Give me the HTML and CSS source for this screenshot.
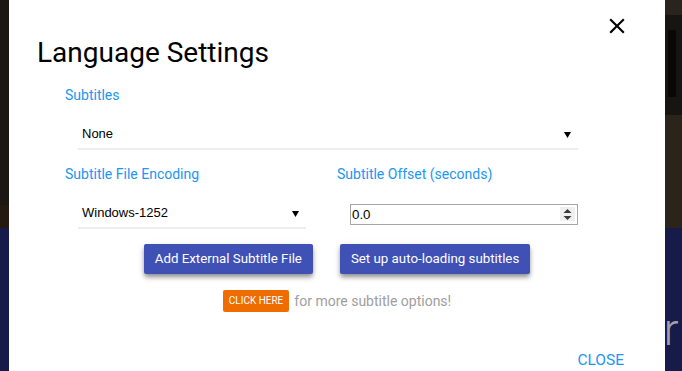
FILE: index.html
```html
<!DOCTYPE html>
<html lang="en">
<head>
<meta charset="utf-8">
<title>Language Settings</title>
<link rel="stylesheet" href="styles.css">
</head>
<body>
<div class="backdrop">
  <div class="bg-right">
    <div class="bg-right-top"></div>
    <div class="bg-frame"><div class="bg-hole"></div></div>
    <div class="bg-right-mid"></div>
  </div>
  <div class="bg-text">er</div>
</div>

<div class="modal">
  <button class="close-x" aria-label="Close">
    <svg width="26" height="26" viewBox="0 0 24 24"><path d="M19 6.41L17.59 5 12 10.590 6.41 5 5 6.41 10.59 12 5 17.59 6.41 19 12 13.41 17.59 19 19 17.59 13.41 12z" fill="#000"/></svg>
  </button>
  <h4 class="title">Language Settings</h4>

  <div class="form">
    <div class="field span2">
      <label class="label">Subtitles</label>
      <div class="select"><span>None</span><svg class="caret" width="7" height="6" viewBox="0 0 7 6"><polygon points="0,0 7,0 3.5,6" fill="#000"/></svg></div>
    </div>
    <div class="field">
      <label class="label">Subtitle File Encoding</label>
      <div class="select"><span>Windows-1252</span><svg class="caret" width="7" height="6" viewBox="0 0 7 6"><polygon points="0,0 7,0 3.5,6" fill="#000"/></svg></div>
    </div>
    <div class="field">
      <label class="label">Subtitle Offset (seconds)</label>
      <div class="ctrl">
        <div class="num">
          <input class="num-input" type="text" value="0.0">
          <span class="spin"><svg width="9" height="11" viewBox="0 0 9 11"><polygon points="4.5,0 8.5,4 0.5,4" fill="#3a3a3a"/><polygon points="0.5,7 8.5,7 4.5,11" fill="#3a3a3a"/></svg></span>
        </div>
      </div>
    </div>
  </div>

  <div class="actions">
    <button class="btn">Add External Subtitle File</button>
    <button class="btn">Set up auto-loading subtitles</button>
  </div>

  <div class="more"><span class="badge">Click here</span><span class="more-text">for more subtitle options!</span></div>

  <div class="footer"><a class="close-link">Close</a></div>
</div>
</body>
</html>
```

FILE: styles.css
```css
* { box-sizing: border-box; }

html, body {
  margin: 0;
  height: 100%;
  overflow: hidden;
}

body {
  position: relative;
  font-family: Roboto, "Noto Sans", sans-serif;
  background: linear-gradient(to bottom, #1b1712 0, #1b1712 205px, #251a10 205px, #251a10 228px, #161b4a 228px);
}

.backdrop {
  position: absolute;
  inset: 0;
}

.bg-right {
  position: absolute;
  left: 665px;
  top: 0;
  width: 17px;
  height: 228px;
  display: flex;
  flex-direction: column;
}
.bg-right-top { height: 15px; background: #29241d; }
.bg-frame {
  height: 100px;
  background: #171512;
  padding: 15px 6px 0 3px;
}
.bg-hole { height: 67px; background: #0a0807; }
.bg-right-mid { flex: 1; background: #2b241b; }

.bg-text {
  position: absolute;
  left: 641px;
  top: 304px;
  font-family: Roboto, sans-serif;
  font-weight: 300;
  font-size: 44px;
  line-height: 52px;
  color: #a3a3ad;
}

.modal {
  position: absolute;
  left: 9px;
  top: 0;
  width: 656px;
  height: 371px;
  overflow: hidden;
  background: #fff;
  padding-top: 36px;
}

.close-x {
  position: absolute;
  top: 13px;
  right: 35px;
  width: 26px;
  height: 26px;
  padding: 0;
  border: 0;
  background: none;
  display: block;
}
.close-x svg { display: block; }

.title {
  margin: 0 0 0 28px;
  font-size: 28px;
  line-height: 34px;
  font-weight: 400;
  color: #000;
}

.form {
  margin: 16px 0 0 56px;
  display: grid;
  grid-template-columns: 241px 241px;
  column-gap: 31px;
  row-gap: 15px;
}
.span2 { grid-column: 1 / 3; }

.label {
  display: block;
  font-size: 14px;
  line-height: 18px;
  color: #2196f3;
  margin-bottom: 16px;
}

.select {
  margin-left: 13px;
  display: flex;
  align-items: center;
  justify-content: space-between;
  padding: 6px 7px 6px 4px;
  font-family: "Liberation Sans", Arial, sans-serif;
  font-size: 13px;
  line-height: 16px;
  color: #000;
  border-bottom: 2px solid #eeeeee;
}
.caret { display: block; margin-top: 1px; }

.ctrl {
  margin-left: 13px;
  height: 30px;
  display: flex;
  align-items: center;
}
.num {
  width: 228px;
  height: 21px;
  border: 1px solid #a6a6a6;
  display: flex;
  align-items: center;
  padding: 0 2px 0 1px;
}
.num-input {
  flex: 1;
  min-width: 0;
  border: 0;
  padding: 0;
  outline: none;
  font-family: "Liberation Sans", Arial, sans-serif;
  font-size: 13.33px;
  color: #000;
  background: transparent;
}
.spin {
  width: 15px;
  height: 14px;
  background: #efefef;
  display: flex;
  align-items: center;
  justify-content: center;
}
.spin svg { display: block; }

.actions {
  margin-top: 15px;
  display: flex;
  justify-content: center;
  gap: 27px;
}
.btn {
  height: 30px;
  padding: 0 11px;
  border: 0;
  border-radius: 2px;
  background: #3f51b5;
  color: #fff;
  font-family: Roboto, sans-serif;
  font-size: 13.3px;
  line-height: 30px;
  box-shadow: 0 4px 5px 0 rgba(0,0,0,0.16), 0 2px 8px 0 rgba(0,0,0,0.10), 0 3px 4px -1px rgba(0,0,0,0.3);
}

.more {
  margin-top: 16px;
  display: flex;
  justify-content: center;
  align-items: center;
  gap: 5px;
}
.badge {
  height: 22px;
  line-height: 22px;
  padding: 0 6px;
  background: #ef6c00;
  color: #fff;
  border-radius: 2px;
  font-size: 10px;
  text-transform: uppercase;
}
.more-text {
  font-size: 14px;
  color: #9e9e9e;
  line-height: 22px;
}

.footer {
  margin-top: 38px;
  padding-right: 41px;
  text-align: right;
}
.close-link {
  font-size: 15.5px;
  line-height: 18px;
  color: #2196f3;
  text-transform: uppercase;
}
```
